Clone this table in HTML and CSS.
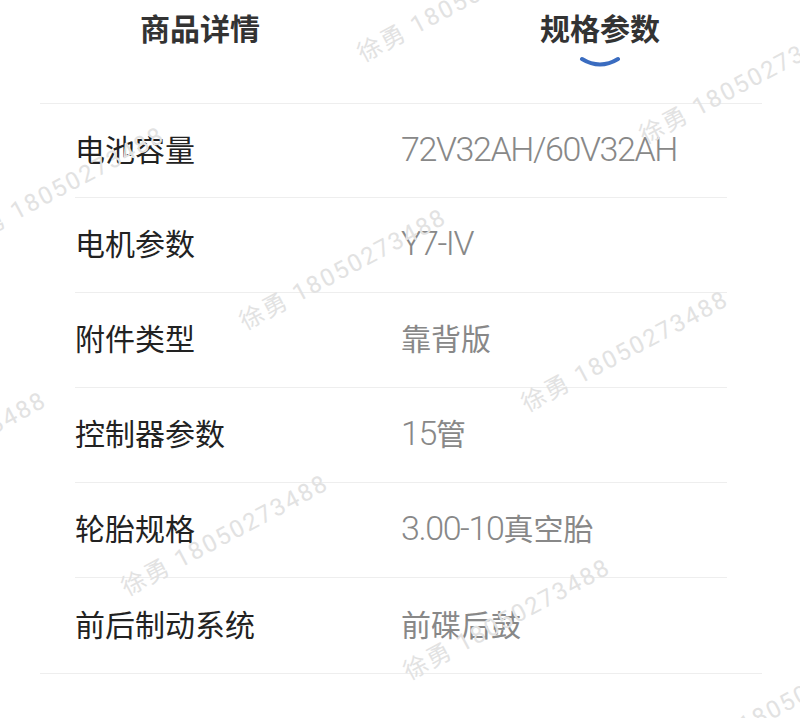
FILE: index.html
```html
<!DOCTYPE html>
<html lang="zh-CN">
<head>
    <meta charset="UTF-8">
    <meta name="viewport" content="width=device-width, initial-scale=1.0">
    <title>规格参数</title>
    <link rel="stylesheet" href="styles.css">
</head>
<body>
    <div class="page">
        <div class="tabs">
            <div class="tab">商品详情</div>
            <div class="tab active">规格参数</div>
        </div>

        <div class="specs">
            <div class="spec-row">
                <div class="spec-label">电池容量</div>
                <div class="spec-value"><span class="num">72V32AH/60V32AH</span></div>
            </div>
            <div class="spec-row">
                <div class="spec-label">电机参数</div>
                <div class="spec-value"><span class="num">Y7-IV</span></div>
            </div>
            <div class="spec-row">
                <div class="spec-label">附件类型</div>
                <div class="spec-value">靠背版</div>
            </div>
            <div class="spec-row">
                <div class="spec-label">控制器参数</div>
                <div class="spec-value"><span class="num">15</span>管</div>
            </div>
            <div class="spec-row">
                <div class="spec-label">轮胎规格</div>
                <div class="spec-value"><span class="num">3.00-10</span>真空胎</div>
            </div>
            <div class="spec-row">
                <div class="spec-label">前后制动系统</div>
                <div class="spec-value">前碟后鼓</div>
            </div>
        </div>

        <!-- watermark layer -->
        <div class="watermarks">
            <span class="wm" style="left: 365px; top: 42px;">徐勇 18050273488</span>
            <span class="wm" style="left: 647px; top: 124px;">徐勇 18050273488</span>
            <span class="wm" style="left: -35px; top: 228px;">徐勇 18050273488</span>
            <span class="wm" style="left: 247px; top: 310px;">徐勇 18050273488</span>
            <span class="wm" style="left: 529px; top: 392px;">徐勇 18050273488</span>
            <span class="wm" style="left: -153px; top: 493px;">徐勇 18050273488</span>
            <span class="wm" style="left: 129px; top: 576px;">徐勇 18050273488</span>
            <span class="wm" style="left: 411px; top: 660px;">徐勇 18050273488</span>
            <span class="wm" style="left: 693px; top: 742px;">徐勇 18050273488</span>
        </div>
    </div>
</body>
</html>
```

FILE: styles.css
```css
body {
    margin: 0;
    background: #fff;
    font-family: Roboto, "Noto Sans CJK SC", sans-serif;
    color: #222;
}
.page {
    position: relative;
    width: 800px;
    height: 718px;
    overflow: hidden;
}
.tabs {
    display: grid;
    grid-template-columns: 1fr 1fr;
    height: 103px;
}
.tab {
    display: flex;
    flex-direction: column;
    align-items: center;
    padding-top: 12px;
    font-family: "Noto Sans CJK SC", sans-serif;
    font-size: 30px;
    font-weight: bold;
    line-height: 30px;
    color: #333;
}
.tab.active::after {
    content: "";
    width: 42px;
    height: 12px;
    margin-top: 14px;
    background: url("data:image/svg+xml;utf8,<svg xmlns='http://www.w3.org/2000/svg' width='42' height='12'><path d='M3 3 Q21 14 39 3' fill='none' stroke='%233a6cc0' stroke-width='4' stroke-linecap='round'/></svg>") no-repeat;
}
.specs {
    margin: 0 38px 0 40px;
    border-top: 1px solid #eee;
    border-bottom: 1px solid #eee;
}
.spec-row {
    display: flex;
    align-items: center;
    height: 94px;
    padding-bottom: 6px;
    box-sizing: border-box;
    margin: 0 35px;
    border-bottom: 1px solid #eee;
    font-size: 30px;
}
.spec-row + .spec-row {
    height: 95px;
}
.spec-row:last-child {
    border-bottom: none;
}
.spec-label {
    width: 326px;
    font-family: "Noto Sans CJK SC", sans-serif;
    color: #222;
}
.spec-value {
    font-family: "Noto Sans CJK SC", sans-serif;
    color: #888;
}
.num {
    font-family: Roboto, sans-serif;
    font-size: 34px;
    font-weight: 300;
    letter-spacing: -1.4px;
}
.watermarks {
    position: absolute;
    top: 0;
    left: 0;
    width: 100%;
    height: 100%;
    pointer-events: none;
}
.wm {
    position: absolute;
    white-space: nowrap;
    font-size: 24px;
    line-height: 24px;
    letter-spacing: 2px;
    color: #e2e2e2;
    transform: rotate(-28deg);
    transform-origin: left bottom;
}
```
